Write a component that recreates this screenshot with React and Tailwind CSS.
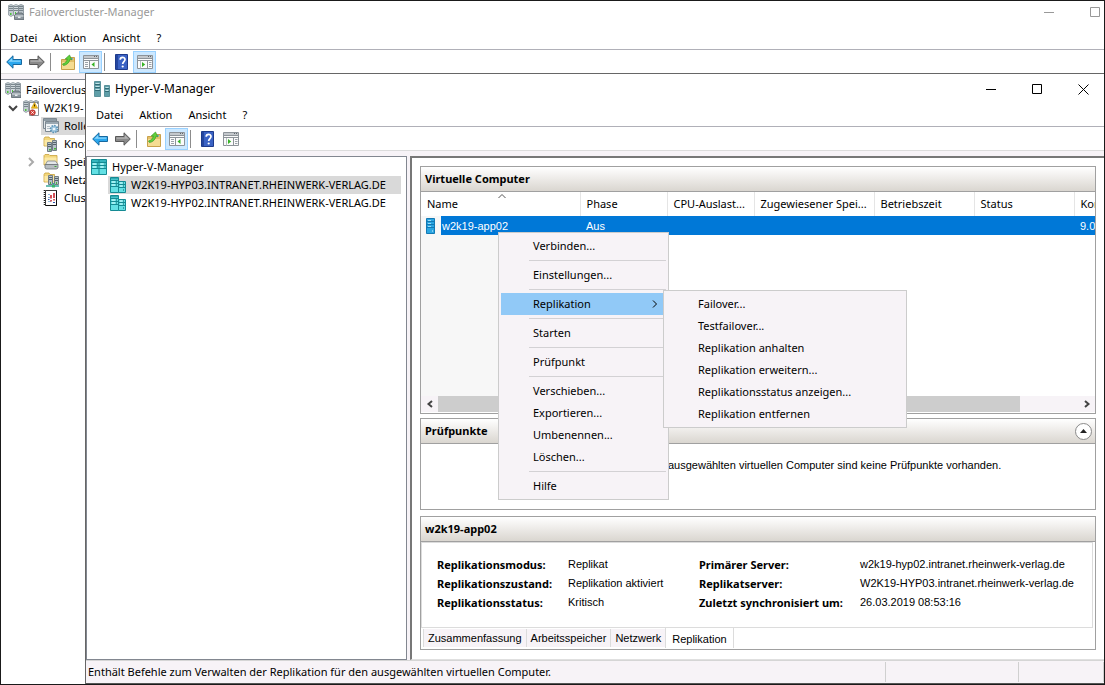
import React from "react";

/* ---------- icons ---------- */

function ServersIcon({ children }) {
  return (
    <svg width="16" height="16" viewBox="0 0 16 16" aria-hidden="true" className="shrink-0">
      <path d="M0.5 1.500l2.500-1 2.500 1v9.500l-2.500 1.500-2.500-1.500z" fill="#c3ccd1" stroke="#8b979e" strokeWidth=".8" />
      <path d="M5.500 1.500l2.500-1 2.500 1v10h-5z" fill="#d3dade" stroke="#8b979e" strokeWidth=".8" />
      <path d="M10.500 1.500l2.500-1 2.500 1v10h-5z" fill="#b9c3c9" stroke="#7c888f" strokeWidth=".8" />
      <path d="M1 2.500h4M1 4.500h4M1 6.500h4M6 2.500h4M6 4.500h4M6 6.500h4M11 2.500h4M11 4.500h4M11 6.500h4" stroke="#65727a" strokeWidth=".8" />
      <path d="M2 9h1.500v2H2z" fill="#4fc23f" />
      <path d="M7 8h1v2H7z" fill="#4fc23f" />
      {children || (
        <g>
          <path d="M6.500 11.500l2.500-2.500h5l2 2.500v4h-9.500z" fill="#8b969d" stroke="#5b666d" strokeWidth=".8" />
          <path d="M7 12h8.500" stroke="#dfe5e8" />
          <path d="M10 12.500h2.500v1.500H10z" fill="#e9edf0" />
        </g>
      )}
    </svg>
  );
}

function ClusterAlertIcon() {
  return (
    <ServersIcon>
      <path d="M6.500 2.500h7l2 2v11h-9z" fill="#fff" stroke="#8a8f94" />
      <path d="M11.500 2.500l3.200 5.700H8.300z" fill="#f6c21c" stroke="#b98a0a" strokeWidth=".6" />
      <path d="M11 4.500h1v2h-1z" fill="#3b2c00" />
      <circle cx="9.500" cy="12.500" r="2.800" fill="#d8433c" stroke="#9c2a26" strokeWidth=".6" />
      <path d="M8.300 11.300l2.400 2.400M10.700 11.300l-2.400 2.400" stroke="#fff" strokeWidth=".9" />
    </ServersIcon>
  );
}

function RolesIcon() {
  return (
    <svg width="16" height="16" viewBox="0 0 16 16" aria-hidden="true" className="shrink-0">
      <path d="M.5.500h13v10H.5z" fill="#dfe4e8" stroke="#7d8890" />
      <path d="M1 1h12v2H1z" fill="#8e9ba4" />
      <path d="M2.500 3.500h13v10h-13z" fill="#f1f4f6" stroke="#7d8890" />
      <path d="M3 4h12v2H3z" fill="#9aa7b0" />
      <path d="M4 8.500h3M4 10.500h3" stroke="#b4bec5" />
      <circle cx="11" cy="11" r="3.500" fill="#9cc4dc" stroke="#5b92b5" strokeWidth="1.600" strokeDasharray="1.500 1.200" />
      <circle cx="11" cy="11" r="1.300" fill="#eef6fb" />
    </svg>
  );
}

function FolderBase() {
  return (
    <g>
      <path d="M1 2.500l1-1.500h4l1 1.500h4.500V10H1z" fill="#f3d77c" stroke="#c9a23c" strokeWidth=".8" />
      <path d="M1.500 4h9.500v5.500H1.500z" fill="#fbe9a6" />
    </g>
  );
}

function NodesIcon() {
  return (
    <svg width="16" height="16" viewBox="0 0 16 16" aria-hidden="true" className="shrink-0">
      <FolderBase />
      <path d="M4.500 6.500h4v9h-4zM9.500 4.500h4v10h-4z" fill="#b5c0c7" stroke="#717d85" />
      <path d="M5 8.500h3M5 10.500h3M10 6.500h3M10 8.500h3" stroke="#56626a" />
      <path d="M6 13h2v1.500H6zM11 12h2v1.500h-2z" fill="#46b83a" />
    </svg>
  );
}

function StorageIcon() {
  return (
    <svg width="16" height="16" viewBox="0 0 16 16" aria-hidden="true" className="shrink-0">
      <path d="M1 1.500L2 .5h4l1 1h7V11H1z" fill="#f3d77c" stroke="#c9a23c" strokeWidth=".8" />
      <path d="M1.500 3.500h12V10h-12z" fill="#fbe9a6" />
      <path d="M2.500 10.500l2-3.500h8l2.500 3.500z" fill="#e4e7e9" stroke="#7c8387" strokeWidth=".8" />
      <path d="M2 10.500h13v3.500q-1 1-2 1H4q-1.500 0-2-1z" fill="#b7bdc1" stroke="#6c7377" strokeWidth=".8" />
      <path d="M11.500 12.500h2" stroke="#3ea335" />
    </svg>
  );
}

function NetworksIcon() {
  return (
    <svg width="16" height="16" viewBox="0 0 16 16" aria-hidden="true" className="shrink-0">
      <FolderBase />
      <path d="M5.500 3.500h4v9h-4zM11.500 4.500h4v8h-4z" fill="#b5c0c7" stroke="#717d85" />
      <path d="M6 5.500h3M6 7.500h3M12 6.500h3M12 8.500h3" stroke="#56626a" />
      <path d="M7 10h1v2H7zM13 10h1v2h-1z" fill="#46b83a" />
      <path d="M3 14h13M10.500 11v4" stroke="#3aa99b" strokeWidth="1.500" />
      <path d="M9 13h3v2.500H9z" fill="#39b56a" />
    </svg>
  );
}

function EventsIcon() {
  return (
    <svg width="16" height="16" viewBox="0 0 16 16" aria-hidden="true" className="shrink-0">
      <path d="M2.500.500h11v15h-11z" fill="#fff" stroke="#3c3c3c" />
      <path d="M1.500 0v16" stroke="#222" strokeWidth="1.600" strokeDasharray="1 1" />
      <path d="M13.500.500v15h-11" fill="none" stroke="#111" />
      <path d="M5 4.500h2M5 7.500h2M5 11.500h3" stroke="#8fb6d8" />
      <path d="M11 3v5M8 5v3.500" stroke="#c8252d" strokeWidth="1.600" />
      <path d="M10.300 9h1.500v1.500h-1.500zM7.300 10h1.500v1.500H7.300z" fill="#c8252d" />
      <path d="M5 9.500h1.500M10 12.500h2" stroke="#2b4fa8" />
    </svg>
  );
}

function HyperVLogo() {
  return (
    <svg width="16" height="16" viewBox="0 0 16 16" aria-hidden="true" className="shrink-0">
      <path d="M.5.500h6v15h-6z" fill="#5f9ea8" stroke="#5b929b" />
      <path d="M1.500 2.500h4M1.500 5.500h4M1.500 8.500h4" stroke="#c3e4e8" />
      <path d="M1 3.500h5M1 6.500h5M1 9.500h5" stroke="#326a74" />
      <path d="M10.500 4.500h5v11h-5z" fill="#5f9ea8" stroke="#5b929b" />
      <path d="M11.500 6.500h3M11.500 9.500h3" stroke="#c3e4e8" />
      <path d="M11 7.500h4M11 10.500h4" stroke="#326a74" />
    </svg>
  );
}

function HyperVRootIcon() {
  return (
    <svg width="16" height="16" viewBox="0 0 16 16" aria-hidden="true" className="shrink-0">
      <path d="M.5.500h15v15H.5z" fill="#63e0e4" stroke="#158a93" />
      <path d="M1 1h14v2H1z" fill="#35b5bd" />
      <path d="M8 1v14M1 6.500h14M1 9.500h14M1 3.500h14" stroke="#158a93" />
      <path d="M2 5h3M9.500 5h3M2 8h3M9.500 8h3" stroke="#e2fdfd" />
      <path d="M6 5h1M13.500 5h1M6 8h1M13.500 8h1" stroke="#0a5c63" />
    </svg>
  );
}

function HostIcon() {
  return (
    <svg width="16" height="16" viewBox="0 0 16 16" aria-hidden="true" className="shrink-0">
      <path d="M.5.500h8v15h-8z" fill="#63e0e4" stroke="#158a93" />
      <path d="M1 1h7v1.500H1z" fill="#2fa9b2" />
      <path d="M1 3.500h7M1 6.500h7M1 9.500h7" stroke="#158a93" />
      <path d="M2 5h3M2 8h3" stroke="#e2fdfd" />
      <path d="M8.500 4.500h7v11h-7z" fill="#63e0e4" stroke="#158a93" />
      <path d="M9 7.500h6M9 10.500h6" stroke="#158a93" />
      <path d="M10 6h2.500M10 9h2.500" stroke="#e2fdfd" />
      <path d="M13 6h1M13 9h1M13 13h1M6 5h1M6 8h1" stroke="#0a5c63" />
    </svg>
  );
}

function VmIcon() {
  return (
    <svg width="9" height="16" viewBox="0 0 9 16" aria-hidden="true" className="shrink-0">
      <path d="M.5.500h8v15h-8z" fill="#2ba6e2" stroke="#1379b4" />
      <path d="M1 3.500h7M1 6.500h7M1 9.500h7" stroke="#1379b4" />
      <path d="M2 2.500h3M2 5.500h3M2 8.500h3" stroke="#9bdcf8" />
      <path d="M6 13h1" stroke="#d9f3fe" />
    </svg>
  );
}

function ArrowIcon({ direction }) {
  const back = direction === "back";
  return (
    <svg width="16" height="14" viewBox="0 0 16 14" aria-hidden="true">
      {back ? (
        <g>
          <path d="M.7 7L7 .8v3.700h8.500v5H7v3.700z" fill="#2aa7ee" stroke="#17689f" strokeLinejoin="round" />
          <path d="M2.300 6.700L6.200 2.900v2.600h8.200v1.200z" fill="#8bd6fb" />
        </g>
      ) : (
        <g>
          <path d="M15.300 7L9 .8v3.700H.5v5H9v3.700z" fill="#8a8a8a" stroke="#585858" strokeLinejoin="round" />
          <path d="M13.700 6.700L9.800 2.900v2.600H1.600v1.200z" fill="#b4b4b4" />
        </g>
      )}
    </svg>
  );
}

function FolderUpIcon() {
  return (
    <svg width="16" height="16" viewBox="0 0 16 16" aria-hidden="true">
      <path d="M1.500 5.500h6l1.500-2h5.500v12h-13z" fill="#e3c06a" stroke="#c9a14a" />
      <path d="M2 8h12v7H2z" fill="#f5dc92" />
      <path d="M10 4h3v1.500h-3z" fill="#6ea3d8" />
      <path d="M2.500 10c2.500-.5 4.300-2.500 4.800-5H5.200L9.500 1l2.300 4.800-1.700-.6C9.300 8.500 7 11 3.500 11.500z" fill="#5fd03a" stroke="#3a9a26" strokeWidth=".7" />
    </svg>
  );
}

function PaneIcon({ side }) {
  return (
    <svg width="16" height="14" viewBox="0 0 16 14" aria-hidden="true">
      <path d="M.5.500h15v13H.5z" fill="#fbfbfb" stroke="#8d9399" />
      <path d="M1 1h14v2H1z" fill="#c4c8cc" />
      <path d="M11 1.500h1M13 1.500h1" stroke="#5f666c" />
      <path d="M0 3.500h16M1 5.500h14" stroke="#8d9399" />
      {side === "left" ? (
        <g>
          <path d="M6.500 6v7.500" stroke="#8d9399" />
          <path d="M2 7.500h3M2 9.500h3M2 11.500h3" stroke="#9aa1a8" />
          <path d="M11.500 7v5L8.500 9.500z" fill="#35b324" />
        </g>
      ) : (
        <g>
          <path d="M10.500 6v7.500" stroke="#8d9399" />
          <path d="M12 7.500h2.500M12 9.500h2.500M12 11.500h2.500" stroke="#9aa1a8" />
          <path d="M5 7v5l3.200-2.500z" fill="#35b324" />
          <path d="M3.500 6v7.500" stroke="#b9bec3" />
        </g>
      )}
    </svg>
  );
}

function HelpIcon() {
  return (
    <svg width="13" height="16" viewBox="0 0 13 16" aria-hidden="true">
      <path d="M.5.500h12v15H.5z" fill="#3a62c4" stroke="#1d3a8c" />
      <path d="M1 1h2v14H1z" fill="#24469f" />
      <path d="M5.200 5.800C5.200 2.600 10 2.700 10 5.600c0 2-2.300 2-2.300 4.400" fill="none" stroke="#fff" strokeWidth="1.700" />
      <circle cx="7.700" cy="12.500" r="1.100" fill="#fff" />
    </svg>
  );
}

function Chevron({ d, width = 8, height = 8, className }) {
  return (
    <svg width={width} height={height} viewBox={`0 0 ${width} ${height}`} fill="none" stroke="currentColor" aria-hidden="true" className={className}>
      <path d={d} />
    </svg>
  );
}

/* ---------- shared window parts ---------- */

function CaptionButton({ label, children }) {
  return (
    <button type="button" aria-label={label} className="flex w-[46px] items-center justify-center">
      <svg width="11" height="11" viewBox="0 0 11 11" fill="none" stroke="currentColor" aria-hidden="true">
        {children}
      </svg>
    </button>
  );
}

function MenuBar() {
  return (
    <nav className="flex h-[23px] shrink-0 items-center border-b border-[#b0b0b8] pl-px">
      {["Datei", "Aktion", "Ansicht", "?"].map((name) => (
        <button key={name} type="button" className="px-2">
          {name}
        </button>
      ))}
    </nav>
  );
}

function ToolButton({ label, active, children }) {
  return (
    <button
      type="button"
      aria-label={label}
      className={
        active
          ? "flex h-[22px] w-[23px] items-center justify-center border border-[#99d1ff] bg-[#cce8ff]"
          : "flex h-[22px] w-[23px] items-center justify-center"
      }
    >
      {children}
    </button>
  );
}

function ToolSeparator() {
  return <span className="mr-[5px] ml-0.5 h-[18px] w-px bg-[#8c8c8c]" />;
}

function Toolbar({ actionsActive }) {
  return (
    <div className="flex h-6 shrink-0 items-center border-b border-[#dcdcdc] pt-px pl-px">
      <ToolButton label="Zurück"><ArrowIcon direction="back" /></ToolButton>
      <ToolButton label="Vorwärts"><ArrowIcon direction="forward" /></ToolButton>
      <ToolSeparator />
      <ToolButton label="Eine Ebene nach oben"><FolderUpIcon /></ToolButton>
      <ToolButton label="Konsolenstruktur" active><PaneIcon side="left" /></ToolButton>
      <ToolSeparator />
      <ToolButton label="Hilfe"><HelpIcon /></ToolButton>
      <ToolButton label="Aktionsbereich" active={actionsActive}><PaneIcon side="right" /></ToolButton>
    </div>
  );
}

function PanelHeader({ title, children }) {
  return (
    <header className="flex h-[25px] shrink-0 items-center justify-between border-b border-[#a0a0a0] bg-linear-to-b from-white to-[#dad6d0] pr-[3px] pl-1">
      <h2 className="font-bold">{title}</h2>
      {children}
    </header>
  );
}

/* ---------- failover cluster window ---------- */

const clusterNodes = [
  { label: "Rollen", icon: <RolesIcon />, selected: true },
  { label: "Knoten", icon: <NodesIcon /> },
  { label: "Speicher", icon: <StorageIcon />, expandable: true },
  { label: "Netzwerke", icon: <NetworksIcon /> },
  { label: "Clusterereignisse", icon: <EventsIcon /> },
];

function ClusterTree() {
  return (
    <ul className="w-[84px] overflow-hidden pt-px whitespace-nowrap">
      <li className="flex h-[18px] items-center gap-[5px] pl-1">
        <ServersIcon />
        Failovercluster-Manager
      </li>
      <li className="flex h-[18px] items-center gap-[5px] pl-[7px]">
        <Chevron d="M1 2l4 4 4-4" width={10} className="shrink-0 stroke-2 text-[#444]" />
        <ClusterAlertIcon />
        W2K19-
      </li>
      {clusterNodes.map((node) => (
        <li key={node.label} className="flex h-[18px] items-center pl-[27px]">
          <span className="w-[13px] shrink-0">
            {node.expandable && <Chevron d="M1 1l4 4-4 4" height={10} className="stroke-2 text-[#aaa]" />}
          </span>
          <span className={node.selected ? "flex h-full grow items-center gap-[5px] bg-[#d9d9d9] pl-0.5" : "flex h-full grow items-center gap-[5px] pl-0.5"}>
            {node.icon}
            {node.label}
          </span>
        </li>
      ))}
    </ul>
  );
}

/* ---------- hyper-v window ---------- */

const hosts = [
  { name: "W2K19-HYP03.INTRANET.RHEINWERK-VERLAG.DE", selected: true },
  { name: "W2K19-HYP02.INTRANET.RHEINWERK-VERLAG.DE", selected: false },
];

function HostTree() {
  return (
    <aside className="w-[321px] shrink-0 border border-[#828790] bg-white pt-px whitespace-nowrap">
      <ul>
        <li className="flex h-[18px] items-center gap-[5px] pl-1">
          <HyperVRootIcon />
          Hyper-V-Manager
        </li>
        {hosts.map((host) => (
          <li
            key={host.name}
            className={
              host.selected
                ? "mr-[5px] ml-[21px] flex h-[18px] items-center gap-[5px] bg-[#d9d9d9] pl-0.5"
                : "mr-[5px] ml-[21px] flex h-[18px] items-center gap-[5px] pl-0.5"
            }
          >
            <HostIcon />
            {host.name}
          </li>
        ))}
      </ul>
    </aside>
  );
}

const columns = ["Phase", "CPU-Auslast...", "Zugewiesener Spei...", "Betriebszeit", "Status", "Konfigurationsversion"];

function MachineList() {
  return (
    <section className="flex min-h-[248px] grow flex-col border border-[#a0a0a0]">
      <PanelHeader title="Virtuelle Computer" />
      <div className="flex grow flex-col overflow-hidden bg-[linear-gradient(to_right,#f7f7f7_159px,#ffffff_159px)]">
        <table className="w-[793px] table-fixed border-collapse text-left whitespace-nowrap">
          <colgroup>
            <col className="w-[159px]" />
            <col className="w-[87px]" />
            <col className="w-[87px]" />
            <col className="w-[120px]" />
            <col className="w-[100px]" />
            <col className="w-[100px]" />
            <col className="w-[140px]" />
          </colgroup>
          <thead>
            <tr className="h-6 bg-white">
              <th scope="col" className="relative border-r border-[#e5e5e5] p-0 pl-1.5 font-normal">
                Name
                <Chevron d="M.5 4l3.500-3.500L7.500 4" height={5} className="absolute top-0.5 left-[77px] text-[#555]" />
              </th>
              {columns.map((name) => (
                <th key={name} scope="col" className="border-r border-[#e5e5e5] p-0 pl-1.5 font-normal">
                  {name}
                </th>
              ))}
            </tr>
          </thead>
          <tbody>
            <tr className="h-[19px] bg-[linear-gradient(to_right,#f7f7f7_20px,#0078d7_20px)] font-['Liberation_Sans',Arial,sans-serif] text-white">
              <td className="p-0 pl-[5px]">
                <span className="flex items-center gap-[7px]">
                  <VmIcon />
                  w2k19-app02
                </span>
              </td>
              <td className="p-0 pl-1.5">Aus</td>
              <td />
              <td />
              <td />
              <td />
              <td className="p-0 pl-1.5">9.0</td>
            </tr>
          </tbody>
        </table>
      </div>
      <div className="mb-px flex h-4 shrink-0 bg-[#f7f3f7] text-[#444]">
        <button type="button" aria-label="Nach links" className="flex w-[17px] items-center justify-center">
          <Chevron d="M6 1L2.500 4 6 7" className="stroke-2" />
        </button>
        <div className="flex grow">
          <div className="w-[91%] bg-[#cdcdcd]" />
        </div>
        <button type="button" aria-label="Nach rechts" className="flex w-[17px] items-center justify-center">
          <Chevron d="M2 1l3.500 3L2 7" className="stroke-2" />
        </button>
      </div>
    </section>
  );
}

function Checkpoints() {
  return (
    <section className="h-[92px] shrink-0 border border-[#a0a0a0]">
      <PanelHeader title="Prüfpunkte">
        <button type="button" aria-label="Bereich reduzieren" className="flex h-[17px] w-[17px] items-center justify-center rounded-full border border-[#8a8a8a] bg-white">
          <svg width="7" height="4" viewBox="0 0 7 4" aria-hidden="true">
            <path d="M0 4l3.500-4L7 4z" fill="#222" />
          </svg>
        </button>
      </PanelHeader>
      <p className="pt-[15px] pl-[206px] font-['Liberation_Sans',Arial,sans-serif] leading-3 whitespace-nowrap">
        Für den ausgewählten virtuellen Computer sind keine Prüfpunkte vorhanden.
      </p>
    </section>
  );
}

const details = [
  ["Replikationsmodus:", "Replikat", "Primärer Server:", "w2k19-hyp02.intranet.rheinwerk-verlag.de"],
  ["Replikationszustand:", "Replikation aktiviert", "Replikatserver:", "W2K19-HYP03.intranet.rheinwerk-verlag.de"],
  ["Replikationsstatus:", "Kritisch", "Zuletzt synchronisiert um:", "26.03.2019 08:53:16"],
];

function MachineDetails() {
  return (
    <section className="shrink-0 border border-[#a0a0a0]">
      <PanelHeader title="w2k19-app02" />
      <div className="mr-0.5 border border-[#dcdcdc] pt-3 pb-[15px] pl-[15px]">
        <dl className="grid grid-cols-[131px_131px_161px_1fr] leading-[19px] whitespace-nowrap">
          {details.flat().map((text, i) =>
            i % 2 === 0 ? (
              <dt key={text} className="font-bold">
                {text}
              </dt>
            ) : (
              <dd key={text} className="font-['Liberation_Sans',Arial,sans-serif]">
                {text}
              </dd>
            )
          )}
        </dl>
      </div>
      <div role="tablist" className="flex h-[21px] items-start pl-0.5 font-['Liberation_Sans',Arial,sans-serif]">
        {["Zusammenfassung", "Arbeitsspeicher", "Netzwerk"].map((name) => (
          <button key={name} type="button" role="tab" aria-selected="false" className="mt-px h-[18px] border-l border-[#dcdcdc] bg-[#f7f3f7] px-1">
            {name}
          </button>
        ))}
        <button type="button" role="tab" aria-selected="true" className="h-5 border-x border-[#dcdcdc] bg-white px-1.5 pt-0.5">
          Replikation
        </button>
      </div>
    </section>
  );
}

/* ---------- context menus ---------- */

const contextGroups = [
  ["Verbinden..."],
  ["Einstellungen..."],
  ["Replikation"],
  ["Starten"],
  ["Prüfpunkt"],
  ["Verschieben...", "Exportieren...", "Umbenennen...", "Löschen..."],
  ["Hilfe"],
];

const replicationItems = [
  "Failover...",
  "Testfailover...",
  "Replikation anhalten",
  "Replikation erweitern...",
  "Replikationsstatus anzeigen...",
  "Replikation entfernen",
];

function ContextMenu() {
  return (
    <div role="menu" aria-label="w2k19-app02" className="absolute top-[158px] left-[412px] w-[171px] border border-[#cccccc] bg-[#f7f3f7] p-0.5">
      {contextGroups.map((group, g) => (
        <div key={group[0]} role="group">
          {g > 0 && <div role="separator" className="my-[3px] ml-7 h-px bg-[#d3d1d4]" />}
          {group.map((item) => (
            <button
              key={item}
              type="button"
              role="menuitem"
              className={
                item === "Replikation"
                  ? "flex h-[22px] w-full items-center justify-between bg-[#91c9f7] pr-[7px] pl-8 text-left"
                  : "flex h-[22px] w-full items-center pl-8 text-left"
              }
            >
              {item}
              {item === "Replikation" && <Chevron d="M2 .5L5.500 4 2 7.500" />}
            </button>
          ))}
        </div>
      ))}
      <div role="menu" aria-label="Replikation" className="absolute top-[57px] left-[164px] w-[244px] border border-[#cccccc] bg-[#f7f3f7] p-0.5">
        {replicationItems.map((item) => (
          <button key={item} type="button" role="menuitem" className="flex h-[22px] w-full items-center pl-8 text-left whitespace-nowrap">
            {item}
          </button>
        ))}
      </div>
    </div>
  );
}

function HyperVWindow() {
  return (
    <div className="absolute top-[72px] right-0 bottom-0 left-[84px] flex flex-col border-t border-l border-[#666666] bg-white">
      <div className="flex h-[30px] shrink-0 items-stretch justify-between pl-2">
        <h1 className="flex items-center gap-[5px] text-[12px]">
          <HyperVLogo />
          Hyper-V-Manager
        </h1>
        <div className="-mr-0.5 flex">
          <CaptionButton label="Minimieren"><path d="M0 5.500h10" /></CaptionButton>
          <CaptionButton label="Maximieren"><path d="M.5.500h9v9h-9z" /></CaptionButton>
          <CaptionButton label="Schließen"><path d="M.5.500l10 10M10.500.500l-10 10" /></CaptionButton>
        </div>
      </div>
      <div className="pl-px">
        <MenuBar />
        <Toolbar />
      </div>
      <div className="flex grow gap-[3px] bg-[#f7f3f7] pt-[5px]">
        <HostTree />
        <main className="flex min-w-0 grow flex-col border-t-2 border-b border-l-2 border-t-[#777] border-b-[#e0e0e0] border-l-[#777] bg-white pt-2 pr-2 pb-[9px] pl-2">
          <MachineList />
          <div className="h-1 shrink-0" />
          <Checkpoints />
          <div className="h-1.5 shrink-0" />
          <MachineDetails />
        </main>
      </div>
      <footer className="flex h-6 shrink-0 items-center border-t border-b border-t-[#d5d5d5] border-b-[#555] bg-[#f7f3f7]">
        <p className="grow pl-0.5 whitespace-nowrap">
          Enthält Befehle zum Verwalten der Replikation für den ausgewählten virtuellen Computer.
        </p>
        <span className="h-5 w-[133px] border-l border-[#d0d0d0]" />
        <span className="h-5 w-[86px] border-x border-[#d0d0d0]" />
      </footer>
      <ContextMenu />
    </div>
  );
}

export default function App() {
  return (
    <div className="relative flex min-h-screen flex-col overflow-hidden border border-[#1a1a1a] bg-white font-['Noto_Sans','Open_Sans',sans-serif] text-[11px] leading-4 text-black">
      <div className="mb-1 flex h-[22px] shrink-0 justify-between pl-[7px] text-[#999]">
        <h1 className="flex items-center gap-[5px]">
          <ServersIcon />
          Failovercluster-Manager
        </h1>
        <div className="-mr-3.5 flex">
          <CaptionButton label="Minimieren"><path d="M0 5.500h10" /></CaptionButton>
          <CaptionButton label="Maximieren"><path d="M.5.500h9v9h-9z" /></CaptionButton>
        </div>
      </div>
      <MenuBar />
      <Toolbar actionsActive />
      <div className="h-[5px] w-full shrink-0 bg-[#f7f3f7]" />
      <div className="grow border-t border-[#828790]">
        <ClusterTree />
      </div>
      <HyperVWindow />
    </div>
  );
}
